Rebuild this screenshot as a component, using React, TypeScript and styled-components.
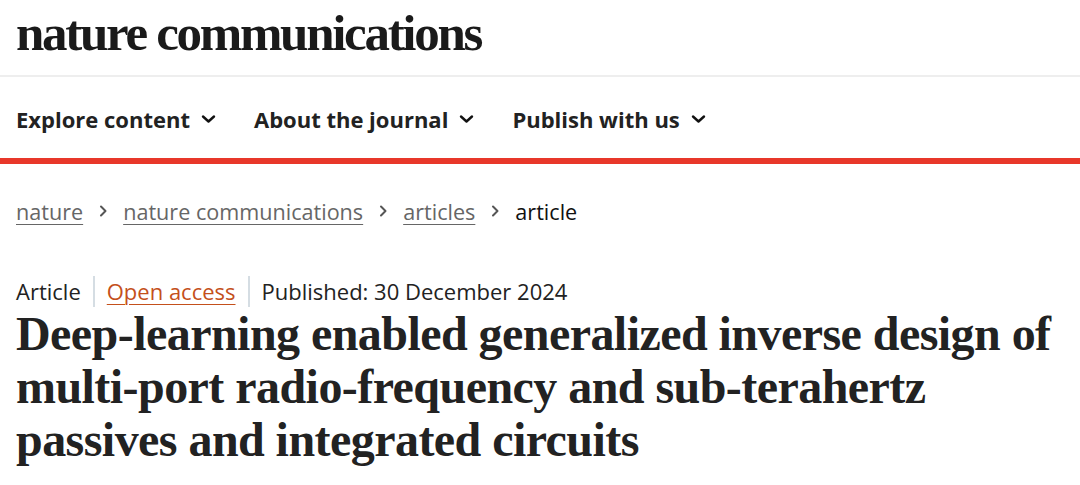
import React from 'react';
import styled, { createGlobalStyle } from 'styled-components';

const GlobalStyle = createGlobalStyle`
  html, body {
    margin: 0;
    padding: 0;
    background: #fff;
  }
  body {
    font-family: 'Open Sans', 'Noto Sans', sans-serif;
    color: #222;
  }
`;

const Page = styled.div`
  width: 1080px;
  height: 485px;
  overflow: hidden;
  background: #fff;
`;

const Masthead = styled.header`
  height: 77px;
  padding: 0 16px;
  display: flex;
  align-items: flex-start;
  border-bottom: 2px solid #eeeeee;
  box-sizing: border-box;
`;

const Logo = styled.div`
  font-family: 'Liberation Serif', 'DejaVu Serif', serif;
  font-weight: 700;
  font-size: 51px;
  line-height: 1;
  letter-spacing: -2.3px;
  color: #1a1a1a;
  margin-top: 8px;
`;

const NavBar = styled.nav`
  height: 81px;
  padding: 0 16px;
  display: flex;
  align-items: center;
  gap: 38px;
  border-bottom: 6px solid #e8372a;
  box-sizing: content-box;
`;

const NavItem = styled.div`
  display: flex;
  align-items: center;
  gap: 11px;
  font-size: 22px;
  font-weight: 700;
  color: #222;
  padding-top: 3px;
`;

const Chevron: React.FC = () => (
  <svg width="15" height="10" viewBox="0 0 15 10" fill="none">
    <path d="M2 2.5l5.5 5 5.5-5" stroke="#111" strokeWidth="2.4" strokeLinecap="round" strokeLinejoin="round" />
  </svg>
);

const Crumbs = styled.ol`
  list-style: none;
  margin: 0;
  padding: 28px 16px 0;
  display: flex;
  align-items: center;
  gap: 15px;
  font-size: 21.6px;
  height: 38px;
`;

const CrumbLink = styled.a`
  color: #666;
  text-decoration: underline;
  text-decoration-thickness: 1px;
  text-underline-offset: 4px;
`;

const CrumbCurrent = styled.span`
  color: #111;
`;

const CrumbSep = styled.span`
  display: flex;
  align-items: center;
`;

const SepArrow: React.FC = () => (
  <svg width="10" height="14" viewBox="0 0 10 14" fill="none">
    <path d="M3 2.5l4.5 4.5-4.5 4.5" stroke="#555" strokeWidth="2" strokeLinecap="round" strokeLinejoin="round" />
  </svg>
);

const Meta = styled.ul`
  list-style: none;
  margin: 0;
  padding: 46px 16px 0;
  display: flex;
  align-items: center;
  font-size: 22px;
  color: #222;
`;

const MetaItem = styled.li<{ first?: boolean }>`
  line-height: 31px;
  padding-right: 12px;
  padding-left: ${p => (p.first ? '0' : '12px')};
  border-left: ${p => (p.first ? 'none' : '2px solid #d5dde3')};
`;

const OpenAccess = styled.a`
  color: #c4501b;
  text-decoration: underline;
  text-decoration-thickness: 1px;
  text-underline-offset: 4px;
`;

const Title = styled.h1`
  margin: 0;
  padding: 0 16px;
  max-width: 1045px;
  font-family: 'Liberation Serif', 'DejaVu Serif', serif;
  font-weight: 700;
  font-size: 48px;
  line-height: 53px;
  letter-spacing: -0.55px;
  color: #222;
`;

const crumbs = ['nature', 'nature communications', 'articles'];

const App: React.FC = () => (
  <Page>
    <GlobalStyle />
    <Masthead>
      <Logo>nature communications</Logo>
    </Masthead>
    <NavBar>
      <NavItem>Explore content <Chevron /></NavItem>
      <NavItem>About the journal <Chevron /></NavItem>
      <NavItem>Publish with us <Chevron /></NavItem>
    </NavBar>
    <Crumbs>
      {crumbs.map(c => (
        <React.Fragment key={c}>
          <li><CrumbLink>{c}</CrumbLink></li>
          <CrumbSep><SepArrow /></CrumbSep>
        </React.Fragment>
      ))}
      <li><CrumbCurrent>article</CrumbCurrent></li>
    </Crumbs>
    <Meta>
      <MetaItem first>Article</MetaItem>
      <MetaItem><OpenAccess>Open access</OpenAccess></MetaItem>
      <MetaItem>Published: 30 December 2024</MetaItem>
    </Meta>
    <Title>
      Deep-learning enabled generalized inverse design of multi-port radio-frequency and sub-terahertz passives and integrated circuits
    </Title>
  </Page>
);

export default App;
